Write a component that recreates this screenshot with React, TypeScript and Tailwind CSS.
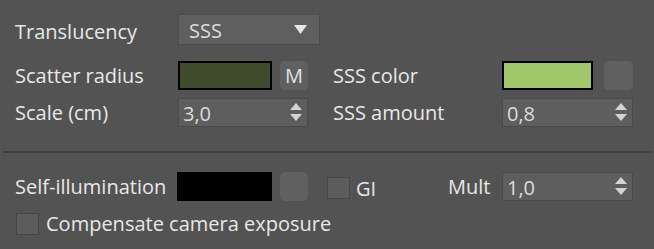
import React from 'react';

const font = { fontFamily: '"Open Sans", "Noto Sans", sans-serif' };

const Label: React.FC<{ w: string; children: React.ReactNode; extra?: string }> = ({ w, children, extra = '' }) => (
  <div className={`${w} ${extra} shrink-0 text-[20px] leading-none text-[#e8e8e8]`}>{children}</div>
);

const Swatch: React.FC<{ w: string; color: string }> = ({ w, color }) => (
  <div className={`${w} h-[29px] border-2 border-black ${color}`} />
);

const SmallButton: React.FC<{ w: string; children?: React.ReactNode }> = ({ w, children }) => (
  <div className={`${w} h-[29px] rounded-[5px] bg-[#606060] flex items-center justify-center text-[20px] text-[#e0e0e0]`}>
    {children}
  </div>
);

const Spinner: React.FC<{ w: string; value: string }> = ({ w, value }) => (
  <div className={`${w} h-[29px] bg-[#5e5e5e] border border-[#4a4a4a] flex items-center justify-between pl-[4px] pr-[5px]`}>
    <span className="text-[20px] leading-none text-[#dcdcdc] pt-[2px]">{value}</span>
    <svg width="12" height="19" viewBox="0 0 12 19">
      <path d="M6 0 L12 7 L0 7 Z" fill="#d4d4d4" />
      <path d="M0 11 L12 11 L6 18 Z" fill="#d4d4d4" />
    </svg>
  </div>
);

const Checkbox: React.FC = () => (
  <div className="w-[23px] h-[22px] bg-[#5c5c5c] border border-[#464646] shrink-0" />
);

export default function App() {
  return (
    <div className="w-[654px] h-[249px] bg-[#535353] overflow-hidden" style={font}>
      <div className="pl-[15px]">
        <div className="flex items-center pt-[14px]">
          <Label w="w-[163px]" extra="pt-[5px]">Translucency</Label>
          <div className="w-[142px] h-[31px] bg-[#5f5f5f] border border-[#4c4c4c] flex items-center justify-between pl-[10px] pr-[12px]">
            <span className="text-[20px] leading-none text-[#dcdcdc] pt-[2px]">SSS</span>
            <svg width="13" height="9" viewBox="0 0 13 9">
              <path d="M0 0 L13 0 L6.5 9 Z" fill="#e6e6e6" />
            </svg>
          </div>
        </div>

        <div className="flex items-center mt-[16px]">
          <Label w="w-[163px]">Scatter radius</Label>
          <Swatch w="w-[94px]" color="bg-[#3f4b2b]" />
          <div className="ml-[8px]">
            <SmallButton w="w-[28px]">M</SmallButton>
          </div>
          <div className="ml-[25px]">
            <Label w="w-[169px]">SSS color</Label>
          </div>
          <Swatch w="w-[91px]" color="bg-[#a1c76b]" />
          <div className="ml-[11px]">
            <SmallButton w="w-[29px]" />
          </div>
        </div>

        <div className="flex items-center mt-[8px]">
          <Label w="w-[163px]">Scale (cm)</Label>
          <Spinner w="w-[130px]" value="3,0" />
          <div className="ml-[25px]">
            <Label w="w-[169px]">SSS amount</Label>
          </div>
          <Spinner w="w-[131px]" value="0,8" />
        </div>
      </div>

      <div className="mx-[3px] mt-[24px] h-[2px] bg-[#404040]" />

      <div className="pl-[15px]">
        <div className="flex items-center mt-[19px]">
          <Label w="w-[162px]">Self-illumination</Label>
          <Swatch w="w-[95px]" color="bg-black" />
          <div className="ml-[8px]">
            <SmallButton w="w-[28px]" />
          </div>
          <div className="ml-[19px] flex items-center gap-[6px] w-[121px] self-end mb-[2px]">
            <Checkbox />
            <span className="text-[20px] leading-none text-[#e8e8e8] pt-[2px]">GI</span>
          </div>
          <Label w="w-[54px]">Mult</Label>
          <Spinner w="w-[131px]" value="1,0" />
        </div>

        <div className="flex items-center gap-[7px] mt-[12px] pl-[1px]">
          <Checkbox />
          <span className="text-[20px] leading-none text-[#e8e8e8]">Compensate camera exposure</span>
        </div>
      </div>
    </div>
  );
}
